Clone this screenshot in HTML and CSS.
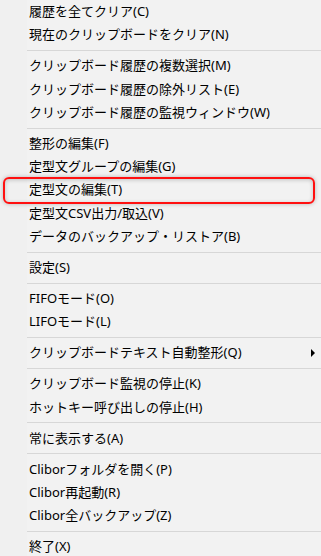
FILE: index.html
```html
<!DOCTYPE html>
<html lang="ja">

<head>
  <meta charset="UTF-8" />
  <meta name="viewport" content="width=device-width, initial-scale=1.0" />
  <title>Clibor メニュー</title>
  <link rel="stylesheet" href="styles.css">
</head>

<body>
  <ul class="menu">
    <li class="item">履歴を全てクリア(C)</li>
    <li class="item">現在のクリップボードをクリア(N)</li>
    <li class="sep"></li>
    <li class="item">クリップボード履歴の複数選択(M)</li>
    <li class="item">クリップボード履歴の除外リスト(E)</li>
    <li class="item">クリップボード履歴の監視ウィンドウ(W)</li>
    <li class="sep"></li>
    <li class="item">整形の編集(F)</li>
    <li class="item">定型文グループの編集(G)</li>
    <li class="item marked">定型文の編集(T)</li>
    <li class="item">定型文CSV出力/取込(V)</li>
    <li class="item">データのバックアップ・リストア(B)</li>
    <li class="sep"></li>
    <li class="item">設定(S)</li>
    <li class="sep"></li>
    <li class="item">FIFOモード(O)</li>
    <li class="item">LIFOモード(L)</li>
    <li class="sep"></li>
    <li class="item sub">クリップボードテキスト自動整形(Q)</li>
    <li class="sep"></li>
    <li class="item">クリップボード監視の停止(K)</li>
    <li class="item">ホットキー呼び出しの停止(H)</li>
    <li class="sep"></li>
    <li class="item">常に表示する(A)</li>
    <li class="sep"></li>
    <li class="item">Cliborフォルダを開く(P)</li>
    <li class="item">Clibor再起動(R)</li>
    <li class="item">Clibor全バックアップ(Z)</li>
    <li class="sep"></li>
    <li class="item">終了(X)</li>
  </ul>
</body>

</html>
```

FILE: styles.css
```css
* {
  box-sizing: border-box;
}

html,
body {
  margin: 0;
  padding: 0;
  height: 100%;
  overflow: hidden;
}

body {
  font-family: "Noto Sans", "Noto Sans CJK JP", sans-serif;
  font-size: 13px;
  color: #000;
  background: #f2f2f2;
}

.menu {
  list-style: none;
  margin: 0;
  padding: 0;
  min-height: 100%;
  background: linear-gradient(to right, #f0f0f0 27px, #f2f2f2 27px);
}

.item {
  position: relative;
  height: 23.3px;
  line-height: 23.3px;
  padding-left: 29px;
  white-space: nowrap;
}

/* submenu arrow */
.sub::after {
  content: "";
  position: absolute;
  right: 6px;
  top: 50%;
  margin-top: -4px;
  border-left: 4px solid #000;
  border-top: 4px solid transparent;
  border-bottom: 4px solid transparent;
}

.sep {
  margin: 3.4px 0 3.3px 27px;
  border-top: 1px solid #d7d7d7;
}

/* red annotation box */
.marked::before {
  content: "";
  position: absolute;
  left: 3px;
  right: 6px;
  top: -1.5px;
  bottom: -2px;
  border: 2px solid #ff1010;
  border-radius: 6px;
  box-shadow: 0 0 4px rgba(0, 0, 0, 0.25), inset 0 1px 4px rgba(0, 0, 0, 0.2);
}
```
